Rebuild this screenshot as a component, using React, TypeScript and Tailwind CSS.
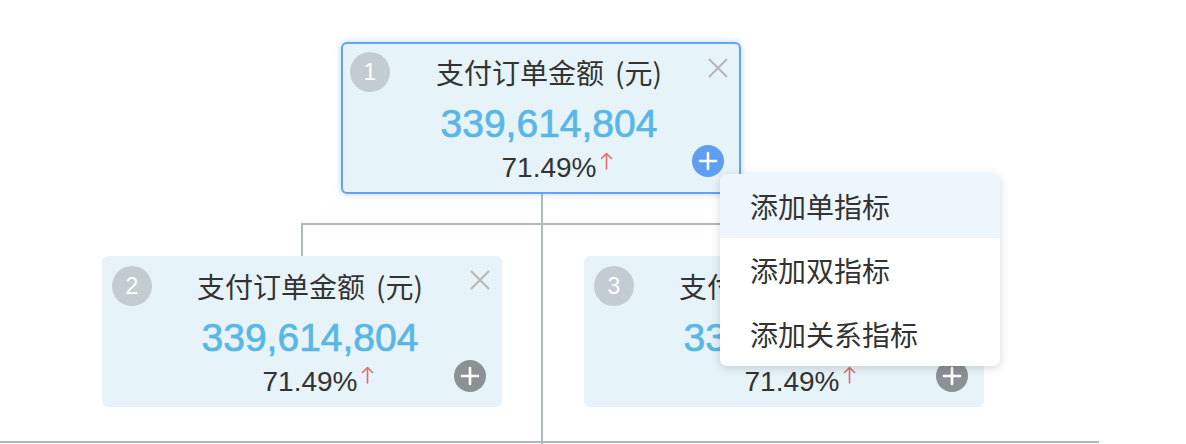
import React from "react";

type CardProps = {
  x: number;
  y: number;
  num: number;
  active?: boolean;
};

function CloseIcon() {
  return (
    <svg width="20" height="20" viewBox="0 0 20 20">
      <path d="M1.5 1.5 L18.5 18.5 M18.5 1.5 L1.5 18.5" stroke="#b4b4b4" strokeWidth="1.8" strokeLinecap="round" fill="none" />
    </svg>
  );
}

function PlusIcon() {
  return (
    <svg width="32" height="32" viewBox="0 0 32 32">
      <path d="M16 8 V24 M8 16 H24" stroke="#ffffff" strokeWidth="2.6" strokeLinecap="round" fill="none" />
    </svg>
  );
}

function UpArrow() {
  return (
    <svg width="13" height="18" viewBox="0 0 13 18">
      <path d="M6.5 1.5 V17 M1.5 6.5 L6.5 1.5 L11.5 6.5" stroke="#e26c6e" strokeWidth="1.6" strokeLinecap="round" strokeLinejoin="round" fill="none" />
    </svg>
  );
}

function Card({ x, y, num, active }: CardProps) {
  return (
    <div
      className={
        active
          ? "absolute w-[400px] h-[152px] rounded-[6px] bg-[#e6f3f8] border-2 border-[#62a3f6] shadow-[0_0_6px_rgba(98,163,246,0.45)]"
          : "absolute w-[400px] h-[151px] rounded-[6px] bg-[#e6f3f8]"
      }
      style={{ left: x, top: y }}
    >
      <div
        className={
          active
            ? "absolute left-[7px] top-[8px] w-[40px] h-[40px] rounded-full bg-[#c3cdd1] flex items-center justify-center text-white text-[23px] font-['Liberation_Sans',Arial,sans-serif]"
            : "absolute left-[10px] top-[10px] w-[40px] h-[40px] rounded-full bg-[#c3cdd1] flex items-center justify-center text-white text-[23px] font-['Liberation_Sans',Arial,sans-serif]"
        }
      >
        {num}
      </div>
      <div className={active ? "absolute right-[11px] top-[14px]" : "absolute right-[12px] top-[14px]"}>
        <CloseIcon />
      </div>
      <div
        className={
          active
            ? "absolute right-[15px] bottom-[15px] w-[32px] h-[32px] rounded-full bg-[#5e9ff4] flex items-center justify-center"
            : "absolute right-[16px] bottom-[15px] w-[32px] h-[32px] rounded-full bg-[#8b9295] flex items-center justify-center"
        }
      >
        <PlusIcon />
      </div>
      <div className={active ? "flex flex-col items-center pl-4 pt-[8px]" : "flex flex-col items-center pl-4 pt-[10px]"}>
        <div className="h-[40px] leading-[40px] text-[28px] text-[#333333] font-['Noto_Sans_CJK_SC',sans-serif] whitespace-nowrap flex">
          <span>支付订单金额</span>
          <span className="ml-[11px]">(元)</span>
        </div>
        <div className="mt-2 h-[48px] leading-[48px] text-[39px] text-[#59b7e6] [-webkit-text-stroke:0.7px_#59b7e6] font-['Liberation_Sans',Arial,sans-serif]">
          339,614,804
        </div>
        <div className="mt-1 h-[32px] leading-[32px] text-[28px] text-[#333333] font-['Liberation_Sans',Arial,sans-serif] relative">
          71.49%
          <span className="absolute left-full top-0 ml-[4px] flex">
            <UpArrow />
          </span>
        </div>
      </div>
    </div>
  );
}

export default function App() {
  const items = ["添加单指标", "添加双指标", "添加关系指标"];
  return (
    <div className="relative w-[1186px] h-[444px] bg-white overflow-hidden">
      {/* connectors */}
      <div className="absolute left-[541px] top-[194px] w-[2px] h-[250px] bg-[#adb9bd]" />
      <div className="absolute left-[301px] top-[223px] w-[485px] h-[2px] bg-[#adb9bd]" />
      <div className="absolute left-[301px] top-[223px] w-[2px] h-[33px] bg-[#adb9bd]" />
      <div className="absolute left-[784px] top-[223px] w-[2px] h-[33px] bg-[#adb9bd]" />
      <div className="absolute left-0 top-[441px] w-[1099px] h-[2px] bg-[#adb9bd]" />

      <Card x={341} y={42} num={1} active />
      <Card x={102} y={256} num={2} />
      <Card x={584} y={256} num={3} />

      {/* dropdown menu */}
      <div className="absolute left-[720px] top-[174px] w-[280px] rounded-[7px] bg-white shadow-[0_2px_10px_rgba(0,0,0,0.16)] overflow-hidden flex flex-col">
        {items.map((t, i) => (
          <div
            key={t}
            className={
              i === 0
                ? "h-[64px] flex items-center pl-[30px] bg-[#edf5fd] text-[28px] text-[#333333] font-['Noto_Sans_CJK_SC',sans-serif]"
                : "h-[64px] flex items-center pl-[30px] text-[28px] text-[#333333] font-['Noto_Sans_CJK_SC',sans-serif]"
            }
          >
            {t}
          </div>
        ))}
      </div>
    </div>
  );
}
